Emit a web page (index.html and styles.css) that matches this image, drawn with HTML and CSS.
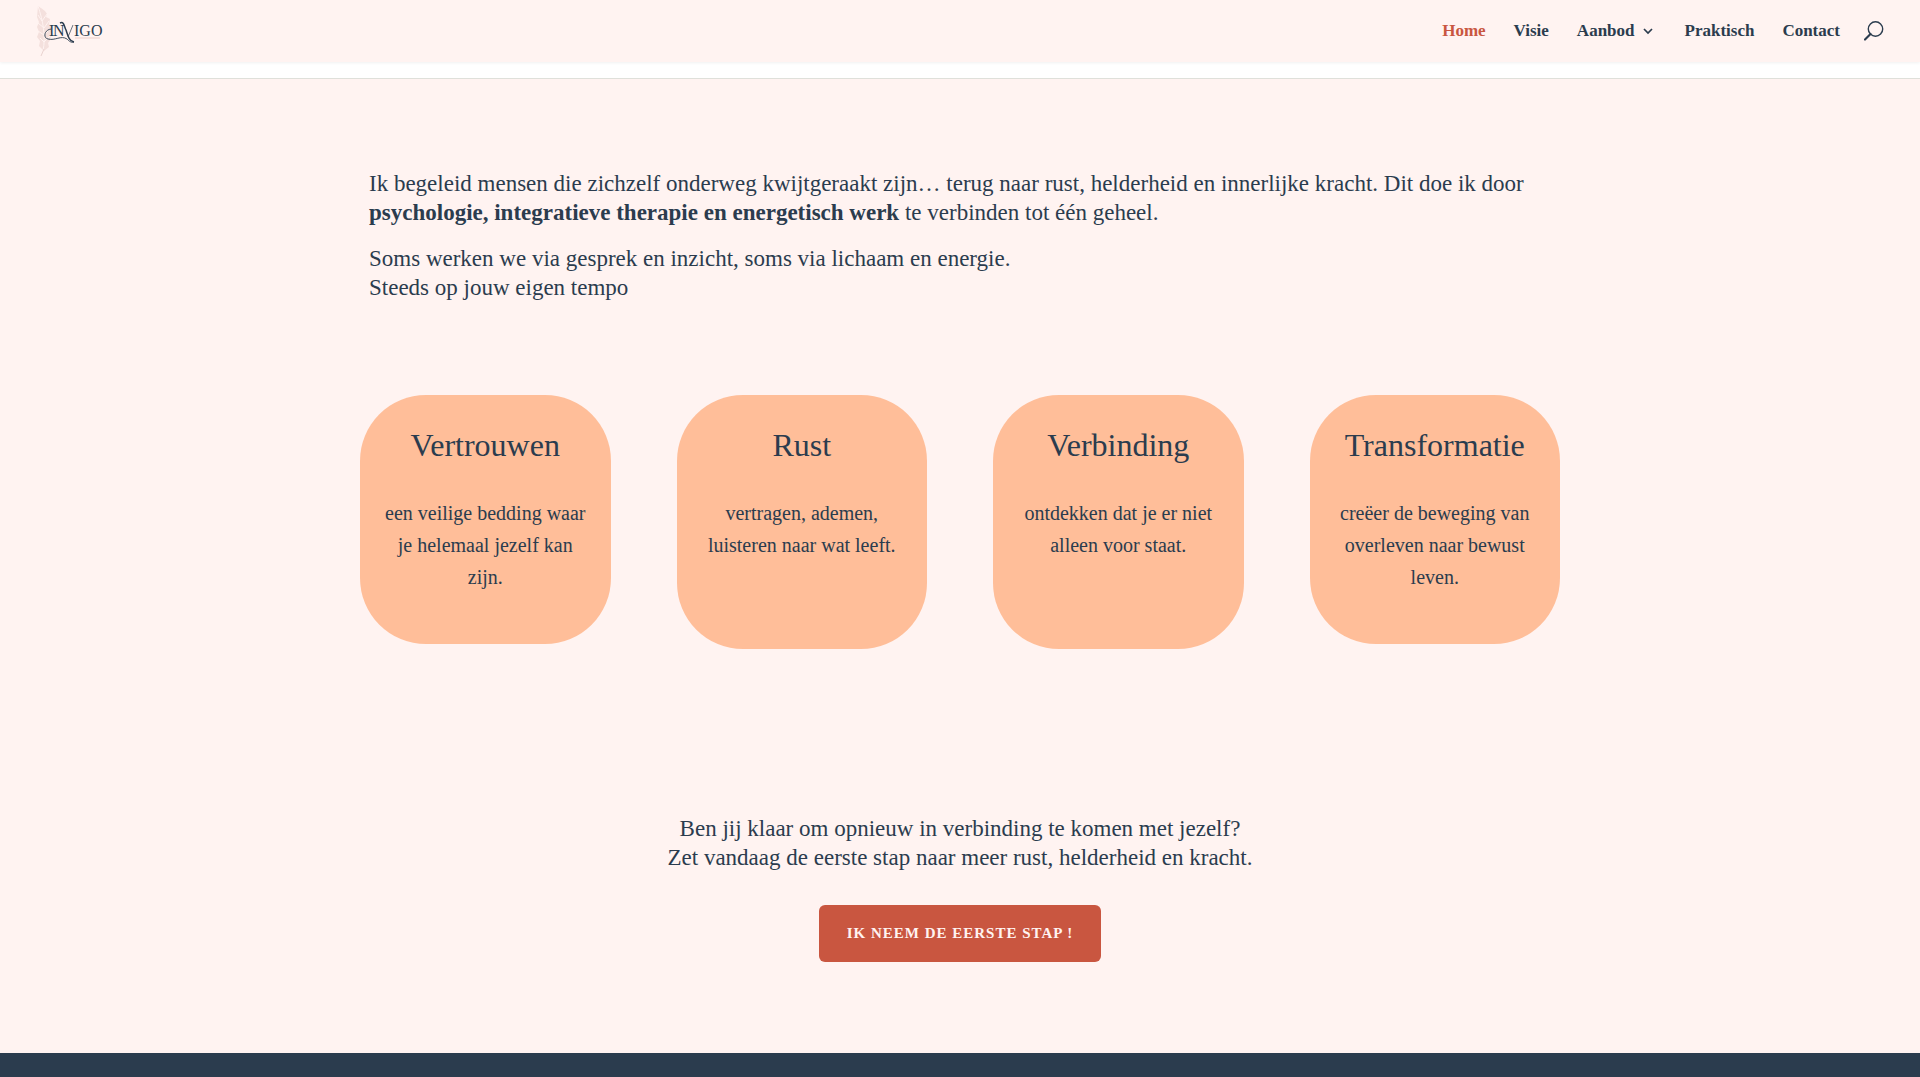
FILE: index.html
```html
<!DOCTYPE html>
<html lang="nl">
<head>
	<meta charset="UTF-8">
	<meta name="viewport" content="width=device-width, initial-scale=1">
	<title>Invigo</title>
	<link rel="stylesheet" href="styles.css">
</head>
<body>
	<header class="header">
		<a class="logo" href="#" aria-label="Invigo">
			<svg width="68" height="60" viewBox="0 0 68 60">
				<!-- veer -->
				<path d="M2 5 C6 8 9 9 11 13 L10 16 L14 18 L13 23 L16 27 L14 33 L15 38 L12 42 L13 46 L8 50 L3 45 L4 40 L1 36 L3 31 L1 26 L3 21 L1 16 Z" fill="#f4e0dd"/>
				<path d="M2 5 C7 20 10 35 7 50 M6 20 L2 14 M6 20 L11 13 M8 27 L2 22 M8 27 L13 20 M8 34 L2 30 M8 34 L15 27 M8 41 L4 37 M8 41 L14 35" fill="none" stroke="#fff3f1"/>
				<path d="M8 48 L5 55" fill="none" stroke="#ead3d0"/>
				<text class="logo-text" x="13" y="35">I</text>
				<text class="logo-text" x="17" y="35">N</text>
				<text class="logo-text" x="38" y="35">IGO</text>
				<!-- V met krullen -->
				<path d="M24 22 C28 20 28 25 30 29 C32 35 33 40 38 41" fill="none" stroke="#2b3c4e" stroke-width="1.500"/>
				<path d="M37 24 C35 28 34 32 32 36" fill="none" stroke="#2b3c4e" stroke-width="0.700"/>
				<path d="M15 28 C8 29 7 37 12 38 C19 40 25 34 31 38 C33 40 35 42 38 41" fill="none" stroke="#2b3c4e" stroke-width="0.900"/>
				<path d="M39 37 H64" stroke="#e8c5c0" stroke-width="0.800"/>
			</svg>
		</a>
		<nav class="nav">
			<a class="active" href="#">Home</a>
			<a href="#">Visie</a>
			<a class="drop" href="#">Aanbod
				<svg width="10" height="7" viewBox="0 0 10 7"><path d="M1 1 L5 5 L9 1" fill="none" stroke="currentColor" stroke-width="1.700"/></svg>
			</a>
			<a href="#">Praktisch</a>
			<a href="#">Contact</a>
			<button class="search" type="button" aria-label="Zoeken">
				<svg width="20" height="20" viewBox="0 0 20 20" fill="none" stroke="currentColor"><circle cx="11.500" cy="8" r="7.200" stroke-width="1.400"/><path d="M6.500 13 L1 18.500" stroke-width="2.200" stroke-linecap="round"/></svg>
			</button>
		</nav>
	</header>

	<main class="main">
		<section class="intro">
			<p>Ik begeleid mensen die zichzelf onderweg kwijtgeraakt zijn… terug naar rust, helderheid en innerlijke kracht. Dit doe ik door <strong>psychologie, integratieve therapie en energetisch werk</strong> te verbinden tot één geheel.</p>
			<p>Soms werken we via gesprek en inzicht, soms via lichaam en energie.<br>Steeds op jouw eigen tempo</p>
		</section>

		<section class="cards">
			<div class="card">
				<h2>Vertrouwen</h2>
				<p>een veilige bedding waar<br>je helemaal jezelf kan<br>zijn.</p>
			</div>
			<div class="card tall">
				<h2>Rust</h2>
				<p>vertragen, ademen,<br>luisteren naar wat leeft.</p>
			</div>
			<div class="card tall">
				<h2>Verbinding</h2>
				<p>ontdekken dat je er niet<br>alleen voor staat.</p>
			</div>
			<div class="card">
				<h2>Transformatie</h2>
				<p>creëer de beweging van<br>overleven naar bewust<br>leven.</p>
			</div>
		</section>

		<section class="cta">
			<p>Ben jij klaar om opnieuw in verbinding te komen met jezelf?<br>Zet vandaag de eerste stap naar meer rust, helderheid en kracht.</p>
			<a class="btn" href="#">Ik neem de eerste stap !</a>
		</section>
	</main>

	<footer class="footer"></footer>
</body>
</html>
```

FILE: styles.css
```css
* {
	box-sizing: border-box;
}
body {
	display: flex;
	flex-direction: column;
	min-height: 100vh;
	margin: 0;
	background: #fff;
	color: #2b3c4e;
	font-family: "Liberation Serif", serif;
}
a {
	color: inherit;
	text-decoration: none;
}
h2, p {
	margin: 0;
}
.header {
	display: flex;
	justify-content: space-between;
	align-items: center;
	height: 62px;
	padding: 0 36px;
	background: #fff3f1;
	box-shadow: 0 1px 3px rgba(0,0,0,.06);
}
.logo svg {
	display: block;
}
.logo-text {
	font-size: 16px;
	fill: #2b3c4e;
}
.nav {
	display: flex;
	align-items: center;
	gap: 28px;
	font-size: 17px;
	font-weight: bold;
}
.nav .active {
	color: #c95640;
}
.drop {
	display: flex;
	align-items: center;
	gap: 8px;
	padding-right: 4px;
}
.search {
	margin-left: -4px;
	padding: 0;
	border: 0;
	background: none;
	color: inherit;
}
.search svg {
	display: block;
}
.main {
	flex: 1;
	margin-top: 16px;
	padding: 90px 24px;
	border-top: 1px solid #dfe0da;
	background: #fff3f1;
}
.intro {
	max-width: 1200px;
	margin: 0 auto;
	padding: 0 9px;
	font-size: 23px;
	line-height: 29px;
}
.intro p + p {
	margin-top: 17px;
}
.cards {
	display: grid;
	grid-template-columns: repeat(4, 1fr);
	align-items: start;
	gap: 66px;
	max-width: 1200px;
	margin: 93px auto 0;
	text-align: center;
}
.card {
	min-height: 249px;
	padding: 30px 16px;
	border-radius: 66px;
	background: #ffbe99;
}
.card.tall {
	min-height: 254px;
}
.card h2 {
	font-size: 32px;
	font-weight: normal;
	line-height: 40px;
}
.card p {
	margin-top: 32px;
	font-size: 20px;
	line-height: 32px;
}
.cta {
	margin-top: 165px;
	text-align: center;
}
.cta p {
	font-size: 23px;
	line-height: 29px;
}
.btn {
	display: inline-block;
	margin-top: 33px;
	padding: 14px 28px;
	border-radius: 6px;
	background: #c95640;
	color: #fff3f1;
	font-size: 15px;
	font-weight: bold;
	line-height: 29px;
	letter-spacing: 1px;
	text-transform: uppercase;
}
.footer {
	height: 24px;
	background: #2b3c4e;
}
```
